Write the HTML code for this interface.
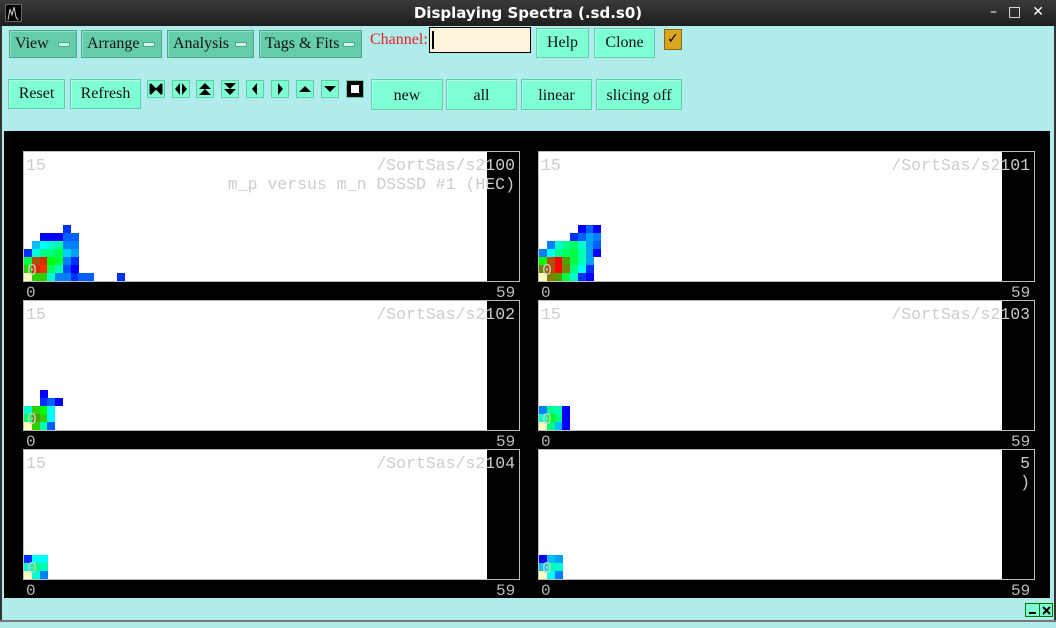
<!DOCTYPE html>
<html><head><meta charset="utf-8"><style>
*{margin:0;padding:0;box-sizing:border-box}
body{width:1056px;height:628px;overflow:hidden;background:#b0ecec;font-family:"Liberation Serif",serif;position:relative}
.a{position:absolute}
#tb{left:0;top:0;width:1056px;height:26px;background:linear-gradient(#3a3a3a,#1e1e1e);color:#fff;font:bold 15px "DejaVu Sans",sans-serif;text-align:center;line-height:26px}
.mb{background:#66cdaa;border:1px solid #4aa88a;box-shadow:inset 1px 1px 0 #8fe0c4;font-size:16px;line-height:26px;padding-left:5px;color:#111}
.mb i{position:absolute;right:6px;top:11px;width:12px;height:5px;background:#d8efe6;border:1px solid #4a9;}
.b{background:#7fffd4;border:1px solid #5fcfa8;box-shadow:inset 1px 1px 0 #b0fff0;font-size:16px;text-align:center;color:#111}
.ib{width:18px;height:18px;background:#7fffd4;border:1px solid #5fcfa8}
.ib svg{display:block}
#blk{left:4px;top:131px;width:1046px;height:467px;background:#000}
.p{border:1px solid #bbb;background:#fff;overflow:hidden}
.p .s{position:absolute;right:0;top:0;width:32px;height:100%;background:#000}
.t{position:absolute;font:16.5px "Liberation Mono",monospace;color:#ccc;white-space:nowrap}
.c{position:absolute;width:8px;height:8px}
.l{font:16px "Liberation Mono",monospace;color:#bbb}
</style></head><body>
<div id="tb" class="a">Displaying Spectra (.sd.s0)</div>
<div class="a" style="left:5px;top:4px;width:17px;height:18px;background:#000;border:1px solid #666"><svg width="15" height="16"><path d="M2 15 L4 4 L6 10 L8 2 L10 12 L12 15" stroke="#ccc" fill="none"/></svg></div>
<div class="a" style="left:990px;top:4px;color:#fff;font:14px 'DejaVu Sans';letter-spacing:11px">–□✕</div>
<div class="a" style="left:0;top:26px;width:2px;height:602px;background:#333"></div>
<div class="a" style="right:0;top:26px;width:2px;height:602px;background:#333"></div>
<div class="a" style="left:0;top:620px;width:1056px;height:8px;background:#b0ecec;border-top:2px solid #777"></div>

<div class="a mb" style="left:9px;top:30px;width:68px;height:28px">View<i></i></div>
<div class="a mb" style="left:81px;top:30px;width:81px;height:28px">Arrange<i></i></div>
<div class="a mb" style="left:167px;top:30px;width:87px;height:28px">Analysis<i></i></div>
<div class="a mb" style="left:259px;top:30px;width:103px;height:28px">Tags &amp; Fits<i></i></div>
<div class="a" style="left:370px;top:31px;color:#e82020;font-size:16px">Channel:</div>
<div class="a" style="left:429px;top:27px;width:102px;height:26px;background:#fff5dc;border:1px solid #000"><div style="margin:3px 0 0 2px;width:2px;height:18px;background:#000"></div></div>
<div class="a b" style="left:536px;top:28px;width:53px;height:30px;line-height:28px">Help</div>
<div class="a b" style="left:594px;top:28px;width:61px;height:30px;line-height:28px">Clone</div>
<div class="a" style="left:664px;top:29px;width:18px;height:21px;background:#daa520;border:1px solid #8a6a10;font:bold 14px 'DejaVu Sans';text-align:center;line-height:19px">✓</div>

<div class="a b" style="left:8px;top:79px;width:57px;height:30px;line-height:28px">Reset</div>
<div class="a b" style="left:70px;top:79px;width:71px;height:30px;line-height:28px">Refresh</div>
<div class="a ib" style="left:147px;top:80px"><svg width="16" height="16"><path d="M2 3V13M14 3V13M3 3L8 8L3 13ZM13 3L8 8L13 13Z" stroke="#000" fill="#000"/></svg></div>
<div class="a ib" style="left:172px;top:80px"><svg width="16" height="16"><path d="M7 2L2 8L7 14ZM9 2L14 8L9 14Z" fill="#000"/></svg></div>
<div class="a ib" style="left:196px;top:80px"><svg width="16" height="16"><path d="M2 8L8 2L14 8ZM2 14L8 8L14 14Z" fill="#000"/></svg></div>
<div class="a ib" style="left:221px;top:80px"><svg width="16" height="16"><path d="M2 2L8 8L14 2ZM2 8L8 14L14 8Z" fill="#000"/></svg></div>
<div class="a ib" style="left:246px;top:80px"><svg width="16" height="16"><path d="M10 2L5 8L10 14Z" fill="#000"/></svg></div>
<div class="a ib" style="left:271px;top:80px"><svg width="16" height="16"><path d="M6 2L11 8L6 14Z" fill="#000"/></svg></div>
<div class="a ib" style="left:296px;top:80px"><svg width="16" height="16"><path d="M2 11L8 5L14 11Z" fill="#000"/></svg></div>
<div class="a ib" style="left:321px;top:80px"><svg width="16" height="16"><path d="M2 5L8 11L14 5Z" fill="#000"/></svg></div>
<div class="a ib" style="left:346px;top:80px;background:#000"><div style="margin:4px;width:8px;height:8px;background:#fff"></div></div>
<div class="a b" style="left:371px;top:79px;width:72px;height:31px;line-height:32px">new</div>
<div class="a b" style="left:446px;top:79px;width:71px;height:31px;line-height:32px">all</div>
<div class="a b" style="left:521px;top:79px;width:71px;height:31px;line-height:32px">linear</div>
<div class="a b" style="left:596px;top:79px;width:86px;height:31px;line-height:32px">slicing off</div>

<div id="blk" class="a"></div>
<div id="panels"></div>

<div class="a" style="left:1025px;top:603px;width:28px;height:14px;background:#7fffd4;border:1px solid #070;overflow:hidden"><span style="position:absolute;left:3px;top:8px;width:7px;height:2px;background:#000"></span><span style="position:absolute;left:13px;top:0;width:1px;height:12px;background:#070"></span><svg style="position:absolute;left:16px;top:2px" width="9" height="9"><path d="M1 1L8 8M8 1L1 8" stroke="#000" stroke-width="2"/></svg></div>

<script>
var Y='#ffffc0';
var P=[
{x:23,y:151,n:'/SortSas/s2100',sub:'m_p versus m_n DSSSD #1 (HEC)',d:[
[Y,'#30d000','#30d000','#00ffcc','#0080ff','#0080ff','#0030ff','#0060ff','#0060ff',0,0,0,'#0030ff'],
['#30d000','#d03000','#ff3000','#00ff60','#00ffb0','#0050ff','#0000ff'],
['#00ff40','#b05000','#d03000','#00ff00','#00ff40','#0080ff','#0030ff'],
['#0030ff','#00ffe0','#00ff80','#00ff80','#00ff40','#00d0ff','#00a0ff'],
[0,'#00c0ff','#00ffff','#00ffd0','#00ffa0','#0080ff','#0080ff'],
[0,0,'#0000ff','#0000ff','#0000ff','#0060ff','#0060ff'],
[0,0,0,0,0,'#0030ff']]},
{x:538,y:151,n:'/SortSas/s2101',d:[
[Y,'#808000','#50a000','#00ff40','#00ffd0','#0030ff','#0000ff'],
['#708000','#b05000','#ff0000','#808000','#00ff80','#00ffff','#0030ff'],
['#00ff00','#b05000','#ff0000','#50a000','#00ff40','#00ffb0','#00a0ff'],
['#0080ff','#00ffff','#00ff90','#00ff60','#00ff40','#00ffb0','#00a0ff','#0000ff'],
[0,'#0080ff','#00ffd0','#00ff90','#00ff60','#00ffd0','#00a0ff','#0060ff'],
[0,0,0,0,'#0030ff','#0060ff','#00a0ff','#0080ff'],
[0,0,0,0,0,'#0000ff','#0060ff','#0000ff']]},
{x:23,y:300,n:'/SortSas/s2102',d:[
[Y,'#30d000','#00ffb0','#0060ff'],['#00ff60','#50a000','#30d000','#00ffff'],['#00ffd0','#30d000','#00ff00','#00ffff'],[0,0,'#0030ff','#0060ff','#0000ff'],[0,0,'#0000ff']]},
{x:538,y:300,n:'/SortSas/s2103',d:[
[Y,'#00ff80','#00c0ff','#0000ff'],['#00ffd0','#00ff20','#00ff80','#0000ff'],['#0080ff','#00ff90','#00ffb0','#0000ff']]},
{x:23,y:449,n:'/SortSas/s2104',d:[
[Y,'#00ffd0','#0080ff'],['#00ffd0','#00ff80','#00ffb0'],['#0030ff','#00ffff','#00ffff']]},
{x:538,y:449,n:'',last:1,d:[
[Y,'#00ffff','#0080ff'],['#00c0ff','#00ffb0','#00ffd0'],['#0000ff','#00c0ff','#00a0ff']]}];
var h='';
P.forEach(function(p){
h+='<div class="a p" style="left:'+p.x+'px;top:'+p.y+'px;width:497px;height:131px">';
p.d.forEach(function(row,r){row.forEach(function(c,i){if(c)h+='<div class="c" style="left:'+(i*7.75)+'px;top:'+(121-r*8)+'px;background:'+c+'"></div>';});});
h+='<div class="s"></div>';
if(!p.last){h+='<div class="t" style="left:2px;top:4px">15</div><div class="t" style="right:4px;top:4px">'+p.n+'</div>';}
else{h+='<div class="t" style="right:4px;top:4px">5</div><div class="t" style="right:4px;top:23px">)</div>';}
if(p.sub)h+='<div class="t" style="right:4px;top:23px">'+p.sub+'</div>';
h+='<div class="t" style="left:3px;top:109px">0</div></div>';
h+='<div class="a l" style="left:'+(p.x+3)+'px;top:'+(p.y+133)+'px">0</div><div class="a l" style="left:'+(p.x+473)+'px;top:'+(p.y+133)+'px">59</div>';
});
document.getElementById('panels').innerHTML=h;
</script>
</body></html>
